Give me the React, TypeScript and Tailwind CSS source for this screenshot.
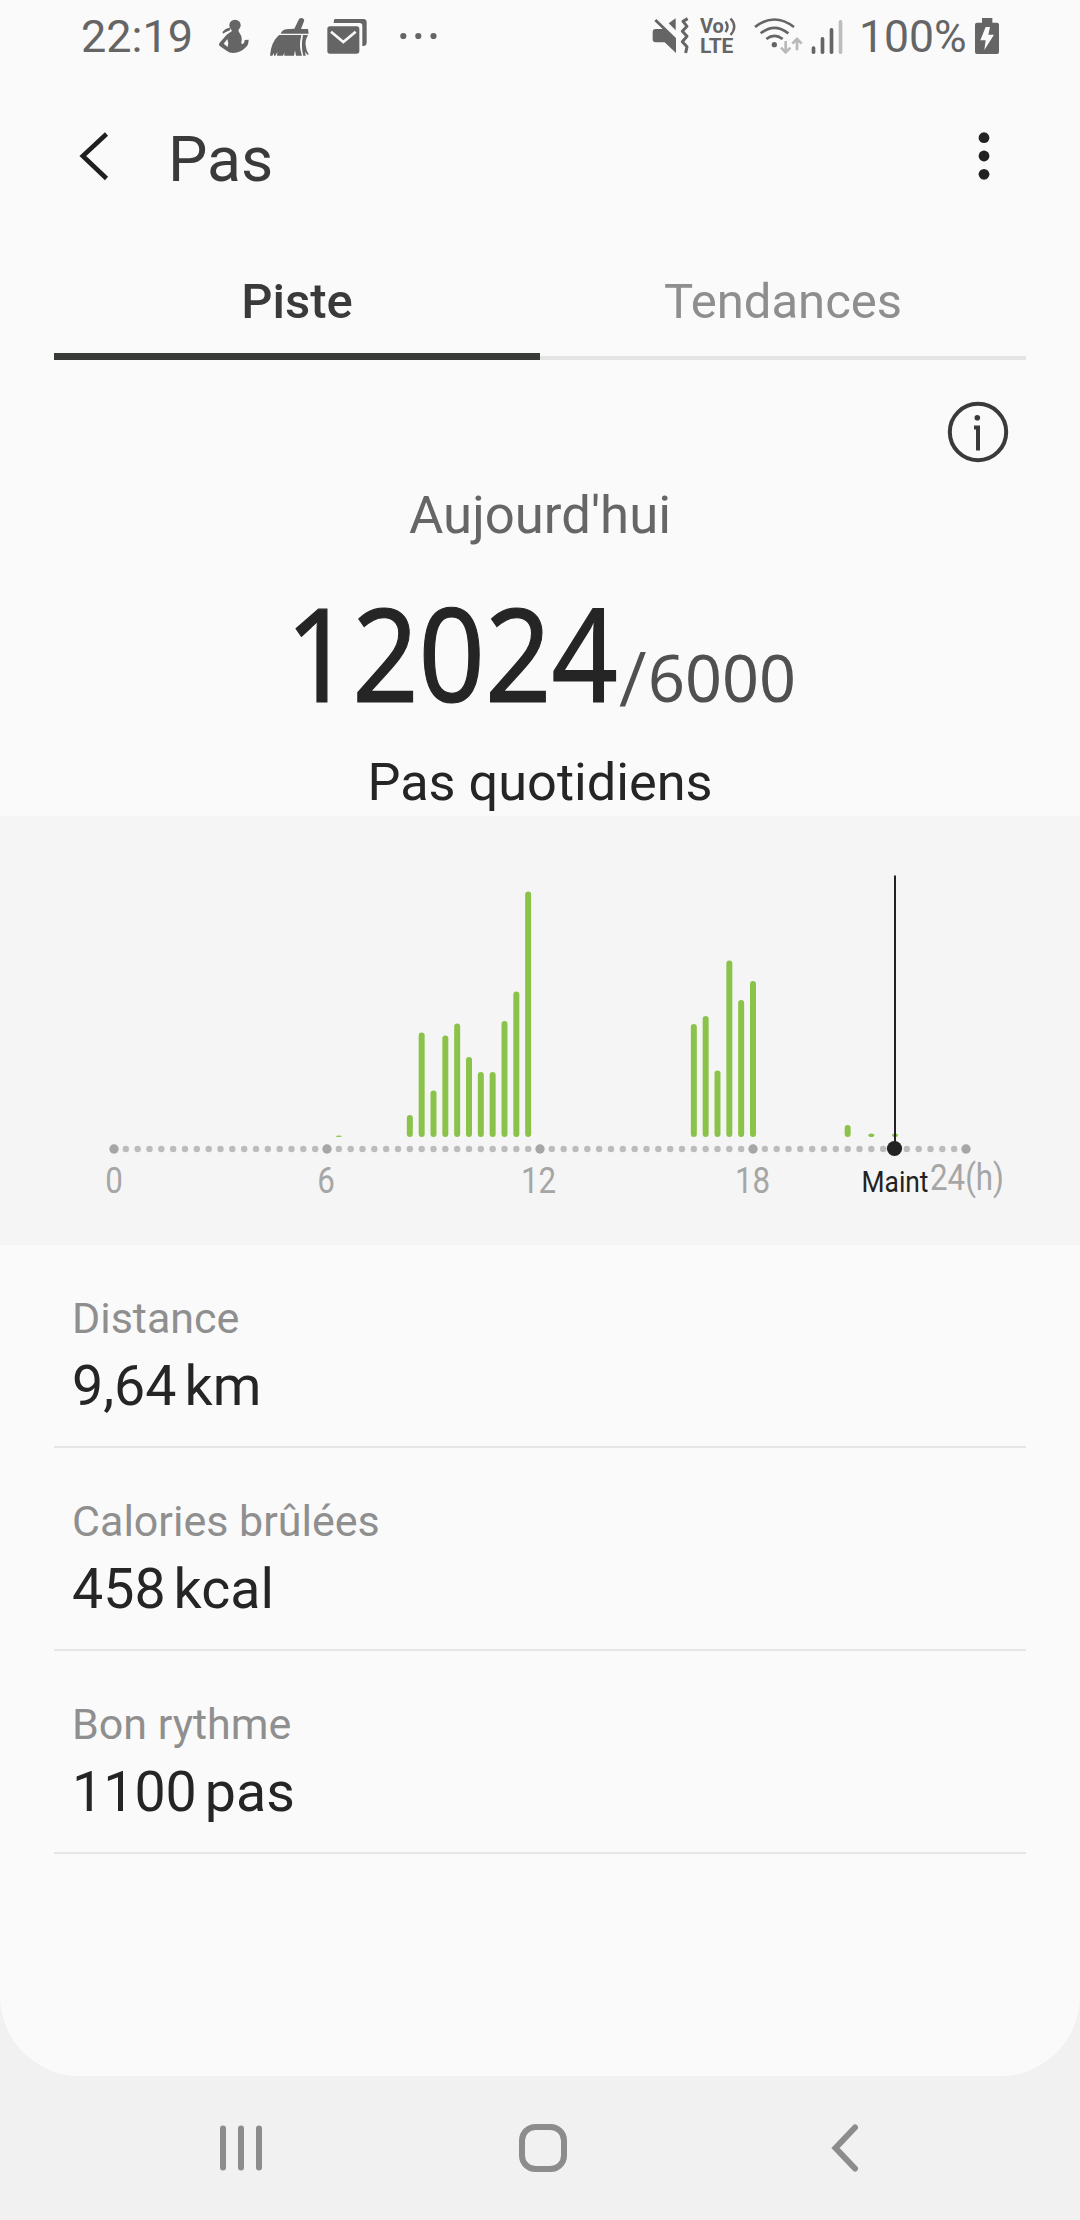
import React from "react";

const bars = [
  { slot: 19, top: 1135.4 },
  { slot: 25, top: 1115 },
  { slot: 26, top: 1032.5 },
  { slot: 27, top: 1090.5 },
  { slot: 28, top: 1035.5 },
  { slot: 29, top: 1023.5 },
  { slot: 30, top: 1057 },
  { slot: 31, top: 1072 },
  { slot: 32, top: 1072 },
  { slot: 33, top: 1021 },
  { slot: 34, top: 991.5 },
  { slot: 35, top: 891.5 },
  { slot: 49, top: 1024 },
  { slot: 50, top: 1016 },
  { slot: 51, top: 1070.5 },
  { slot: 52, top: 960.5 },
  { slot: 53, top: 1000 },
  { slot: 54, top: 981 },
  { slot: 62, top: 1125 },
  { slot: 64, top: 1133.5 },
  { slot: 66, top: 1133.5 },
];

const stats = [
  { label: "Distance", value: "9,64", unit: "km" },
  { label: "Calories brûlées", value: "458", unit: "kcal" },
  { label: "Bon rythme", value: "1100", unit: "pas" },
];

// one slot = 20 minutes
const slotX = (slot: number) => 114 + slot * (71 / 6);

function StatusBar() {
  return (
    <div className="flex h-[76px] items-start text-[#656565]">
      <span className="ml-[81px] w-[137px] text-[45px] leading-[74px] whitespace-nowrap">22:19</span>
      {/* Assistant figure */}
      <svg className="mt-[18px] h-9 w-8 shrink-0" viewBox="471 54 96 108" fill="#656565">
        <circle cx="522" cy="76" r="17" />
        <path d="M484 96 L494 87 L509 82 L507 91 L493 97 L487 101 Z" />
        <path d="M512 88 L532 88 Q531 95 536 100 Q545 111 541 126 Q539 133 546 132 Q552 128 551 120 L563 119 Q563 136 552 144 Q539 158 517 159 Q504 159 498 153 L476 138 Q471 133 476 128 L497 104 Q506 98 512 94 Z M499 117 L488 131 L500 141 Q504 128 499 117 Z" fillRule="evenodd" />
      </svg>
      {/* Cleaner broom */}
      <svg className="mt-[18px] ml-5 h-[38px] w-[39px] shrink-0" viewBox="629 54 117 114" fill="#656565">
        <path d="M716 57 Q723 51 730 57 Q733 61 730 66 L722 87 L743 87 L745 101 L661 101 Q665 90 677 88 L702 86 Z" />
        <path d="M656 105 L723 105 Q718 124 719 139 Q720 154 725 167 L707 167 L704 151 L701 167 L672 167 L672 158 L668 167 L650 167 L651 156 L645 167 L641 167 L641 159 L636 167 L629 167 Q632 126 656 105 Z" />
        <path d="M728 105 L743 105 Q732 124 737 141 Q738 152 745 162 L742 165 L734 155 L736 167 L729 167 Q721 140 728 105 Z" />
      </svg>
      {/* Mail */}
      <svg className="mt-[18px] ml-[18px] h-[37px] w-[40px] shrink-0" viewBox="800 54 120 111" fill="#656565">
        <path d="M823 57 H909 Q919 57 919 67 V128 Q919 137 909 138 H906 V77 Q906 69 898 69 H820 Q820 60 823 57 Z" />
        <rect x="801" y="79" width="96" height="82" rx="8" />
        <path d="M812 95 L849 126 L886 95" fill="none" stroke="#fafafa" strokeWidth="8" />
      </svg>
      <svg className="mt-8 ml-[32px] h-2 w-10 shrink-0" viewBox="0 0 40 8" fill="#656565">
        <circle cx="4.3" cy="4" r="3.1" />
        <circle cx="19.3" cy="4" r="3.1" />
        <circle cx="34.5" cy="4" r="3.1" />
      </svg>
      {/* Muted with vibration */}
      <svg className="mt-[17px] ml-[213px] h-[37px] w-[38px] shrink-0" viewBox="66 51 114 111" fill="#656565">
        <path d="M79 57 L138 114 V159 L104 127 H77 Q68 127 68 118 V97 Q68 87 77 87 H98 L73 63 Z" />
        <path d="M137 55 V91 L116 70 Z" />
        <path d="M173 56 L159 64 L171 79 L157 94 L171 109 L157 125 L171 140 L167 159" fill="none" stroke="#656565" strokeWidth="9" strokeLinejoin="round" />
      </svg>
      <div className="relative mt-[17px] ml-[10px] h-[40px] w-[38px] shrink-0 font-bold">
        <div className="h-[19px] text-[20px] leading-[19px]">Vo</div>
        <div className="h-[21px] text-[21px] leading-[21px] tracking-[-0.3px]">LTE</div>
        <svg className="absolute top-0 left-[24px] h-[19px] w-[13px]" viewBox="0 0 13 19" fill="none" stroke="#656565" strokeWidth="2.4">
          <path d="M1.5 4.5 Q5.5 9.5 1.5 15" />
          <path d="M6.5 1.5 Q14 9.5 6.5 18" />
        </svg>
      </div>
      {/* Wifi with transfer arrows */}
      <svg className="mt-[17px] ml-[16px] h-[37px] w-[50px] shrink-0" viewBox="372 51 150 111" fill="none" stroke="#656565" strokeWidth="8">
        <path d="M375 81 Q433 36 492 81" />
        <path d="M392 100 Q433 67 475 100" />
        <path d="M409 117 Q433 98 458 117" />
        <circle cx="433" cy="134" r="8" fill="#656565" stroke="none" />
        <path d="M467 123 V157 M453 143 L467 157 L481 143 M501 151 V119 M487 131 L501 117 L515 131" stroke="#b9b9b9" strokeWidth="8" />
      </svg>
      <svg className="mt-[19px] ml-[7px] h-9 w-8 shrink-0" viewBox="543 57 96 108" fill="#656565">
        <rect x="545" y="139" width="11" height="23" rx="5" />
        <rect x="572" y="111" width="11" height="51" rx="5" />
        <rect x="599" y="84" width="11" height="78" rx="5" />
        <rect x="626" y="60" width="11" height="102" rx="5" fill="#bdbdbd" />
      </svg>
      <span className="ml-[16px] w-[116px] text-[44.5px] leading-[74px] whitespace-nowrap">100%</span>
      <svg className="mt-[18px] h-9 w-6 shrink-0" viewBox="1035 54 72 108">
        <path d="M1056 54 H1087 V68 H1101 Q1107 68 1107 74 V156 Q1107 162 1101 162 H1041 Q1035 162 1035 156 V74 Q1035 68 1041 68 H1056 Z" fill="#656565" />
        <path d="M1067 81 H1080 L1075 104 H1092 L1063 150 L1067 121 H1051 Z" fill="#fafafa" />
      </svg>
    </div>
  );
}

function Header() {
  return (
    <div className="flex h-[164px] items-start">
      <svg className="mt-[55px] ml-[78px] h-[50px] w-[32px]" viewBox="0 0 32 50" fill="none" stroke="#1f1f1f" strokeWidth="4.6">
        <path d="M28.5 3 L4.8 25 L28.5 47.5" />
      </svg>
      <h1 className="mt-[46px] ml-[58px] text-[62.5px] leading-[76px] text-[#3a3a3a]">Pas</h1>
      <svg className="mt-[54px] mr-[86px] ml-auto h-[52px] w-5" viewBox="0 0 20 52" fill="#222222">
        <circle cx="10" cy="7.7" r="5.4" />
        <circle cx="10" cy="26" r="5.4" />
        <circle cx="10" cy="44.3" r="5.4" />
      </svg>
    </div>
  );
}

function Tabs() {
  return (
    <div className="mx-[54px] flex h-[120px] text-center text-[49px] leading-[60px]">
      <div className="flex-1 border-b-[7px] border-[#383a38] pt-[32px] font-medium text-[#3a3a3a]">Piste</div>
      <div className="flex-1 border-b-[4px] border-[#e4e4e4] pt-[32px] text-[#8e8e8e]">Tendances</div>
    </div>
  );
}

function Summary() {
  return (
    <div className="h-[456px] text-center">
      <div className="flex h-[119px] justify-end pt-[41px] pr-[71px]">
        <svg className="h-[62px] w-[62px]" viewBox="0 0 62 62" fill="none" stroke="#3a3a3a" strokeWidth="4">
          <circle cx="31" cy="31" r="28.2" />
          <circle cx="30.3" cy="16.8" r="2.8" fill="#3a3a3a" stroke="none" />
          <path d="M27 26.5 H31 V49.5" />
        </svg>
      </div>
      <div className="text-[52.7px] leading-[72px] text-[#666666]">Aujourd'hui</div>
      <div className="flex h-[199px] items-baseline pt-[21px] pl-[287px] leading-[160px]">
        <div className="flex w-[331px] shrink-0 justify-end font-['Noto_Sans'] text-[130px] font-normal text-[#252525] [-webkit-text-stroke:1.2px_#252525]">
          <span className="origin-right scale-x-[0.893]">12024</span>
        </div>
        <span className="ml-px text-[70px] text-[#505050]">/</span>
        <span className="origin-left scale-x-[0.973] font-['Noto_Sans'] text-[66.5px] text-[#505050]">6000</span>
      </div>
      <div className="text-[52.3px] leading-[64px] text-[#252525]">Pas quotidiens</div>
    </div>
  );
}

function StepsChart() {
  return (
    <div className="h-[429px] bg-[#f5f5f5]">
      <svg className="h-full w-full" viewBox="0 816 1080 429">
        {bars.map((bar) => (
          <rect key={bar.slot} x={slotX(bar.slot) - 3} y={bar.top} width="6" height={1137 - bar.top} rx="3" fill="#8bc34a" />
        ))}
        {Array.from({ length: 73 }, (_, i) => (
          <circle key={i} cx={slotX(i)} cy="1149" r={i % 18 === 0 ? 4.7 : 3.2} fill={i % 18 === 0 ? "#a6a6a6" : "#bcbcbc"} />
        ))}
        {/* Current time */}
        <rect x="894" y="875.5" width="2" height="273" fill="#222222" />
        <circle cx="894.5" cy="1148.5" r="7.6" fill="#222222" />
        <g fill="#a6a6a6" fontSize="36" textAnchor="middle">
          <text x="114" y="1192.5" textLength="17.6" lengthAdjust="spacingAndGlyphs">0</text>
          <text x="326" y="1192.5" textLength="17.6" lengthAdjust="spacingAndGlyphs">6</text>
          <text x="538.5" y="1192.5" textLength="35.2" lengthAdjust="spacingAndGlyphs">12</text>
          <text x="752.5" y="1192.5" textLength="35.2" lengthAdjust="spacingAndGlyphs">18</text>
          <text x="967" y="1190" textLength="74" lengthAdjust="spacingAndGlyphs">24(h)</text>
        </g>
        <text x="895" y="1192" fontSize="30" textAnchor="middle" textLength="67" lengthAdjust="spacingAndGlyphs" fill="#222222">Maint</text>
      </svg>
    </div>
  );
}

function StatRow({ label, value, unit }: { label: string; value: string; unit: string }) {
  return (
    <div className="mx-[54px] h-[203px] border-b-2 border-[#e6e6e6] pt-[48px] pl-[18px]">
      <div className="text-[43px] leading-[50px] text-[#8f8f8f]">{label}</div>
      <div className="flex gap-2 text-[55.5px] leading-[87px] text-[#252525]">
        <span>{value}</span>
        <span>{unit}</span>
      </div>
    </div>
  );
}

function NavBar() {
  return (
    <div className="flex h-[144px] items-center pl-[217px]">
      <svg className="h-[50px] w-[48px]" viewBox="217 2123 48 50" stroke="#8c8c8c" strokeWidth="6" strokeLinecap="round">
        <path d="M223 2128.5 V2167.5 M241 2128.5 V2167.5 M259 2128.5 V2167.5" />
      </svg>
      <svg className="ml-[253px] h-[50px] w-[50px]" viewBox="0 0 50 50" fill="none" stroke="#8c8c8c" strokeWidth="6">
        <rect x="4" y="4" width="42" height="42" rx="13.5" />
      </svg>
      <svg className="ml-[262px] h-[50px] w-[32px]" viewBox="0 0 32 50" fill="none" stroke="#8c8c8c" strokeWidth="6" strokeLinecap="round">
        <path d="M25 4.5 L5.5 25 L25 45.5" />
      </svg>
    </div>
  );
}

function App() {
  return (
    <div className="h-[2220px] w-[1080px] overflow-hidden bg-[#f1f1f1] font-[Roboto,sans-serif]">
      <div className="h-[2076px] rounded-b-[80px] bg-[#fafafa]">
        <StatusBar />
        <Header />
        <Tabs />
        <Summary />
        <StepsChart />
        {stats.map((stat) => (
          <StatRow key={stat.label} {...stat} />
        ))}
      </div>
      <NavBar />
    </div>
  );
}

export default App;
